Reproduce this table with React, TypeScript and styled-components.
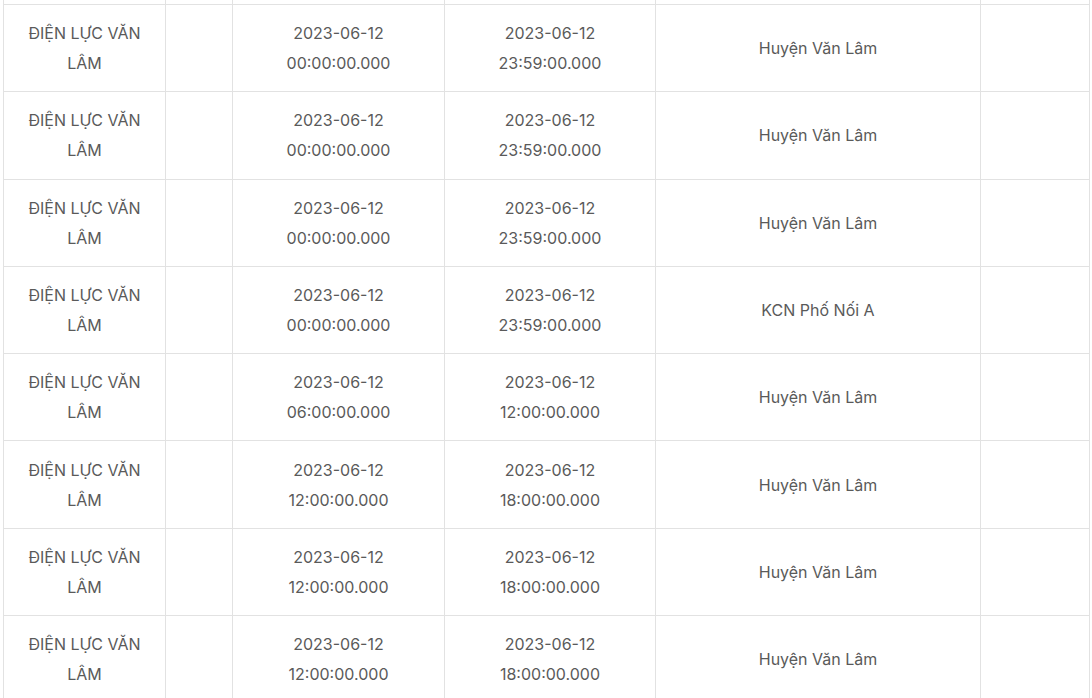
import React from 'react';
import styled, { createGlobalStyle } from 'styled-components';

type Row = {
  unit: string;
  start: [string, string];
  end: [string, string];
  area: string;
};

const GlobalStyle = createGlobalStyle`
  html, body {
    margin: 0;
    padding: 0;
    background: #fff;
  }
  body {
    font-family: Inter, "Noto Sans", sans-serif;
  }
`;

const columns = [162, 67, 212, 211, 325, 109];

const rows: Row[] = [
  { unit: 'ĐIỆN LỰC VĂN LÂM', start: ['2023-06-12', '00:00:00.000'], end: ['2023-06-12', '23:59:00.000'], area: 'Huyện Văn Lâm' },
  { unit: 'ĐIỆN LỰC VĂN LÂM', start: ['2023-06-12', '00:00:00.000'], end: ['2023-06-12', '23:59:00.000'], area: 'Huyện Văn Lâm' },
  { unit: 'ĐIỆN LỰC VĂN LÂM', start: ['2023-06-12', '00:00:00.000'], end: ['2023-06-12', '23:59:00.000'], area: 'Huyện Văn Lâm' },
  { unit: 'ĐIỆN LỰC VĂN LÂM', start: ['2023-06-12', '00:00:00.000'], end: ['2023-06-12', '23:59:00.000'], area: 'KCN Phố Nối A' },
  { unit: 'ĐIỆN LỰC VĂN LÂM', start: ['2023-06-12', '06:00:00.000'], end: ['2023-06-12', '12:00:00.000'], area: 'Huyện Văn Lâm' },
  { unit: 'ĐIỆN LỰC VĂN LÂM', start: ['2023-06-12', '12:00:00.000'], end: ['2023-06-12', '18:00:00.000'], area: 'Huyện Văn Lâm' },
  { unit: 'ĐIỆN LỰC VĂN LÂM', start: ['2023-06-12', '12:00:00.000'], end: ['2023-06-12', '18:00:00.000'], area: 'Huyện Văn Lâm' },
  { unit: 'ĐIỆN LỰC VĂN LÂM', start: ['2023-06-12', '12:00:00.000'], end: ['2023-06-12', '18:00:00.000'], area: 'Huyện Văn Lâm' },
];

export default function App() {
  return (
    <>
      <GlobalStyle />
      <Viewport>
        <Table>
          <colgroup>
            {columns.map((w, i) => (
              <Col key={i} $w={w} />
            ))}
          </colgroup>
          <tbody>
            {/* the end of the row above, scrolled out of view */}
            <TailRow>
              {columns.map((_, i) => (
                <TailCell key={i} />
              ))}
            </TailRow>
            {rows.map((row, i) => (
              <tr key={i}>
                <Cell>
                  <Unit>{row.unit}</Unit>
                </Cell>
                <Cell />
                <Cell>
                  {row.start[0]}
                  <br />
                  {row.start[1]}
                </Cell>
                <Cell>
                  {row.end[0]}
                  <br />
                  {row.end[1]}
                </Cell>
                <Cell>{row.area}</Cell>
                <Cell />
              </tr>
            ))}
          </tbody>
        </Table>
      </Viewport>
    </>
  );
}

const Viewport = styled.div`
  width: 1092px;
  height: 698px;
  overflow: hidden;
  padding-left: 3px;
  box-sizing: border-box;
`;

const Table = styled.table`
  width: 1087px;
  border-collapse: collapse;
  table-layout: fixed;
  color: #5a5a5a;
  font-size: 16px;
  font-weight: 400;
  line-height: 30px;
`;

const Col = styled.col<{ $w: number }>`
  width: ${p => p.$w}px;
`;

const TailRow = styled.tr`
  height: 4px;
`;

const TailCell = styled.td`
  border-left: 1px solid #e2e2e2;
  border-right: 1px solid #e2e2e2;
  padding: 0;
  height: 4px;
`;

const Cell = styled.td`
  border: 1px solid #e2e2e2;
  padding: 13.15px 8px;
  text-align: center;
  vertical-align: middle;
`;

const Unit = styled.div`
  width: 120px;
  margin: 0 auto;
`;
